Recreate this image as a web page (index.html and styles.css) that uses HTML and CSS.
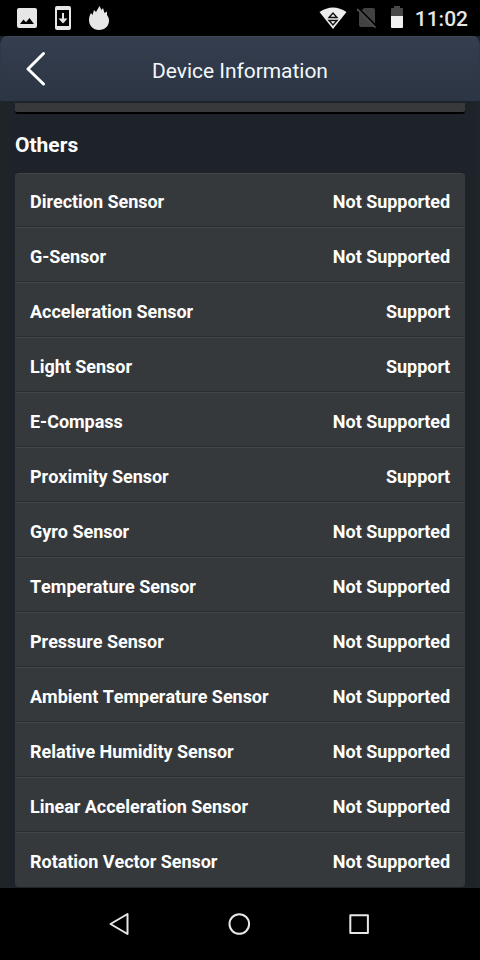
FILE: index.html
```html
<!DOCTYPE html>
<html lang="en">
  <head>
    <meta charset="UTF-8" />
    <meta name="viewport" content="width=device-width, initial-scale=1.0" />
    <title>Device Information</title>
    <link rel="stylesheet" href="styles.css">
  </head>
  <body>
    <div class="status-bar">
      <div class="status-left">
        <svg width="20" height="20" viewBox="0 0 20 20">
          <path fill="#e6e6e6" fill-rule="evenodd" d="M2 0H18Q20 0 20 2V18Q20 20 18 20H2Q0 20 0 18V2Q0 0 2 0ZM3 16H17L12.500 10L9 14.200L6.500 11.500Z" />
        </svg>
        <svg width="16" height="24" viewBox="0 0 16 24">
          <path fill="#e6e6e6" fill-rule="evenodd" d="M2 0H14Q16 0 16 2V22Q16 24 14 24H2Q0 24 0 22V2Q0 0 2 0ZM2 4V20H14V4Z" />
          <path fill="#e6e6e6" d="M7 7H9V12.500H12.500L8 17.500L3.500 12.500H7Z" />
        </svg>
        <svg width="20" height="24" viewBox="0 0 20 24">
          <path fill="#e6e6e6" d="M10 24C4 24 0 19.500 0 14C0 11 .8 9 2 7L3.500 9L5 4L7 6L10.500 0L12.500 4L14 2L15.500 7L18 5.500V9C19.500 11 20 12.500 20 14.500C20 20 16 24 10 24Z" />
        </svg>
      </div>
      <div class="status-right">
        <svg width="28" height="22" viewBox="0 0 28 22">
          <path fill="#eee" d="M.5 5Q14-4 27.500 5L14 22Z" />
          <path fill="none" stroke="#111" stroke-width="1.400" d="M10 10.500L14 6L18 10.500ZM10 13.500H18L14 18Z" />
        </svg>
        <svg class="no-sim" width="20" height="22" viewBox="0 0 20 22">
          <path fill="#424242" d="M7 1H16Q18 1 18 3V20H4Q2 20 2 18V6Z" />
          <path stroke="#000" stroke-width="2" d="M1 1L20 20" />
          <path stroke="#4d4d4d" stroke-width="1.800" d="M0 2L18.500 20.700" />
        </svg>
        <svg class="battery" width="12" height="22" viewBox="0 0 12 22">
          <path fill="#484848" d="M3 0H9V2H11Q12 2 12 3V10H0V3Q0 2 1 2H3Z" />
          <path fill="#f0f0f0" d="M0 10H12V21Q12 22 11 22H1Q0 22 0 21Z" />
        </svg>
        <span class="clock">11:02</span>
      </div>
    </div>

    <div class="header-wrap">
      <div class="header">
        <svg class="back" width="20" height="36" viewBox="0 0 20 36">
          <path fill="none" stroke="#fff" stroke-width="3" stroke-linecap="round" stroke-linejoin="round" d="M17.500 2.500L2 18L17.500 33" />
        </svg>
        <h1>Device Information</h1>
      </div>
    </div>

    <div class="content">
      <div class="previous-card"></div>
      <h2>Others</h2>
      <ul class="card">
        <li><span>Direction Sensor</span><span>Not Supported</span></li>
        <li><span>G-Sensor</span><span>Not Supported</span></li>
        <li><span>Acceleration Sensor</span><span>Support</span></li>
        <li><span>Light Sensor</span><span>Support</span></li>
        <li><span>E-Compass</span><span>Not Supported</span></li>
        <li><span>Proximity Sensor</span><span>Support</span></li>
        <li><span>Gyro Sensor</span><span>Not Supported</span></li>
        <li><span>Temperature Sensor</span><span>Not Supported</span></li>
        <li><span>Pressure Sensor</span><span>Not Supported</span></li>
        <li><span>Ambient Temperature Sensor</span><span>Not Supported</span></li>
        <li><span>Relative Humidity Sensor</span><span>Not Supported</span></li>
        <li><span>Linear Acceleration Sensor</span><span>Not Supported</span></li>
        <li><span>Rotation Vector Sensor</span><span>Not Supported</span></li>
      </ul>
    </div>

    <div class="nav-bar">
      <svg width="24" height="24" viewBox="0 0 24 24">
        <path d="M20.500 2V22L3.500 12Z" />
      </svg>
      <svg width="24" height="24" viewBox="0 0 24 24">
        <circle cx="12.300" cy="12" r="9.800" />
      </svg>
      <svg width="24" height="24" viewBox="0 0 24 24">
        <rect x="3.300" y="3.300" width="17.600" height="17.600" />
      </svg>
    </div>
  </body>
</html>
```

FILE: styles.css
```css
* {
  margin: 0;
  padding: 0;
  box-sizing: border-box;
}

body {
  height: 960px;
  display: flex;
  flex-direction: column;
  overflow: hidden;
  background-color: #000;
  color: #fff;
  font-family: Roboto, "Liberation Sans", sans-serif;
}

svg {
  display: block;
  flex-shrink: 0;
}

.status-bar {
  height: 36px;
  padding: 0 12px 0 17px;
  display: flex;
  align-items: center;
  justify-content: space-between;
}

.status-left,
.status-right {
  display: flex;
  align-items: center;
}

.status-left {
  gap: 18px;
}

.no-sim {
  margin-left: 10px;
}

.battery {
  margin-left: 14px;
  margin-top: -2px;
}

.clock {
  margin-left: 12px;
  padding-top: 2px;
  font-size: 21px;
  font-weight: 500;
  line-height: 36px;
  color: #e6e6e6;
}

.header-wrap {
  background-color: #1b252d;
}

.header {
  height: 65px;
  display: grid;
  grid-template-columns: 60px 1fr 60px;
  align-items: center;
  border: 1px solid #2d3947;
  border-top-color: #404957;
  border-bottom: none;
  border-radius: 8px 8px 2px 2px;
  background: linear-gradient(#343e4e, #2b3544);
}

.back {
  margin: 0 0 0 25px;
}

.header h1 {
  padding-top: 4px;
  text-align: center;
  font-size: 21px;
  font-weight: 400;
  letter-spacing: -0.04px;
  color: #f3f8fc;
}

.content {
  height: 787px;
  padding: 1px 15px 0;
  background: linear-gradient(90deg, #1d2527, #1e2329 15px, #1e2229 465px, #1e252b);
  border-top: 1px solid #1c252e;
}

.previous-card {
  height: 11px;
  background-color: #38393b;
  border-bottom: 2px solid #000;
  border-radius: 0 0 3px 3px;
}

.content h2 {
  height: 59px;
  padding-top: 2px;
  line-height: 58px;
  font-size: 21px;
  font-weight: 700;
}

.card {
  list-style: none;
  padding: 0 1px;
  border-top: 1px solid #424548;
  border-radius: 4px;
  background-color: #36393b;
  overflow: hidden;
}

.card li {
  height: 55px;
  padding: 4px 14px 0;
  display: flex;
  align-items: center;
  justify-content: space-between;
  font-size: 18px;
  font-weight: 700;
  font-kerning: none;
  letter-spacing: -0.03px;
  border-top: 1px solid #434648;
  border-bottom: 1px solid #2b2e30;
}

.card li:first-child {
  height: 53px;
  padding-top: 3px;
  border-top: none;
}

.card li:last-child {
  padding-top: 3px;
  border-bottom: none;
}

.nav-bar {
  flex: 1;
  padding-right: 2px;
  display: flex;
  align-items: center;
  justify-content: center;
  gap: 96px;
}

.nav-bar path,
.nav-bar circle,
.nav-bar rect {
  fill: none;
  stroke: #e6e6e6;
  stroke-width: 2;
  stroke-linejoin: round;
}
```
